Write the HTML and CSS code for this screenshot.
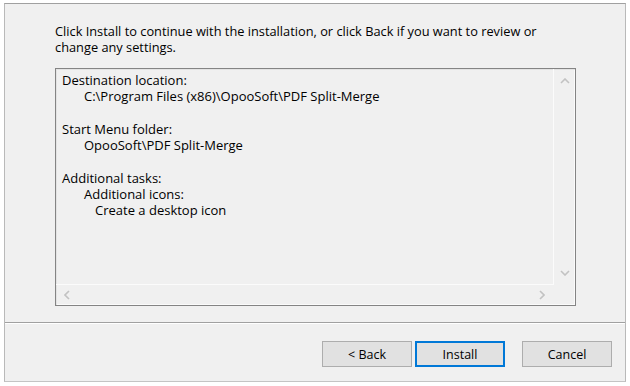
FILE: index.html
```html
<!DOCTYPE html>
<html>
<head>
<meta charset="utf-8">
<link rel="stylesheet" href="styles.css">
</head>
<body>
<div class="window">
  <div class="upper">
    <p class="intro">Click Install to continue with the installation, or click Back if you want to review or<br>change any settings.</p>
    <div class="listbox">
      <div class="memo">
        <div class="l0">Destination location:</div>
        <div class="l1">C:\Program Files (x86)\OpooSoft\PDF Split-Merge</div>
        <div class="blank"></div>
        <div class="l0">Start Menu folder:</div>
        <div class="l1">OpooSoft\PDF Split-Merge</div>
        <div class="blank"></div>
        <div class="l0">Additional tasks:</div>
        <div class="l1">Additional icons:</div>
        <div class="l2">Create a desktop icon</div>
      </div>
      <div class="vscroll">
        <svg class="chev" width="10" height="6" viewBox="0 0 10 6"><polyline points="1,5 5,1 9,5" /></svg>
        <svg class="chev" width="10" height="6" viewBox="0 0 10 6"><polyline points="1,1 5,5 9,1" /></svg>
      </div>
      <div class="hscroll">
        <svg class="chev" width="6" height="10" viewBox="0 0 6 10"><polyline points="5,1 1,5 5,9" /></svg>
        <svg class="chev" width="6" height="10" viewBox="0 0 6 10"><polyline points="1,1 5,5 1,9" /></svg>
      </div>
      <div class="corner"></div>
    </div>
  </div>
  <div class="lower">
    <button class="btn">&lt; Back</button>
    <button class="btn default">Install</button>
    <button class="btn cancel">Cancel</button>
  </div>
</div>
</body>
</html>
```
FILE: styles.css
```css
html, body {
  margin: 0;
  padding: 0;
  background: #ffffff;
}
body {
  font-family: "Open Sans", "Liberation Sans", sans-serif;
  font-size: 13px;
  color: #000;
}
.window {
  margin: 3px 0 0 4px;
  width: 620px;
  height: 377px;
  background: #f0f0f0;
  border-left: 1px solid #b9b9b9;
  border-right: 1px solid #b9b9b9;
  border-bottom: 1px solid #c4c4c4;
  border-top: 1px solid #a0a0a0;
  display: flex;
  flex-direction: column;
}
.upper {
  height: 318px;
  padding: 19px 0 0 50px;
  box-sizing: border-box;
}
.intro {
  margin: 0;
  line-height: 16px;
  font-size: 12.8px;
}
.listbox {
  margin-top: 13px;
  width: 521px;
  height: 238px;
  box-sizing: border-box;
  border: 1px solid #848484;
  box-shadow: inset 1px 1px 0 #e3e3e3, inset -1px -1px 0 #fbfbfb;
  display: grid;
  grid-template-columns: 1fr 21px;
  grid-template-rows: 1fr 20px;
}
.memo {
  padding: 3px 0 0 6px;
  line-height: 16px;
  border-right: 1px solid #fbfbfb;
  border-bottom: 1px solid #fbfbfb;
  overflow: hidden;
}
.blank { height: 17px; }
.l1 { padding-left: 22px; }
.l2 { padding-left: 33px; }
.vscroll {
  display: flex;
  flex-direction: column;
  justify-content: space-between;
  align-items: center;
  padding: 9px 0 9px;
}
.hscroll {
  display: flex;
  justify-content: space-between;
  align-items: center;
  padding: 0 9px 0 8px;
}
.chev polyline {
  fill: none;
  stroke: #c2c2c2;
  stroke-width: 1.6;
}
.lower {
  flex: 1;
  border-top: 1px solid #a0a0a0;
  box-shadow: inset 0 1px 0 #ffffff;
  display: flex;
  justify-content: flex-end;
  align-items: flex-start;
  padding: 18px 13px 0 0;
}
.btn {
  font-family: "Open Sans", "Liberation Sans", sans-serif;
  font-size: 12.5px;
  color: #000;
  width: 90px;
  height: 26px;
  background: #e1e1e1;
  border: 1px solid #adadad;
  margin: 0 0 0 3px;
  padding: 0;
}
.btn.default {
  border: 2px solid #0078d7;
}
.btn.cancel {
  margin-left: 17px;
}
```
